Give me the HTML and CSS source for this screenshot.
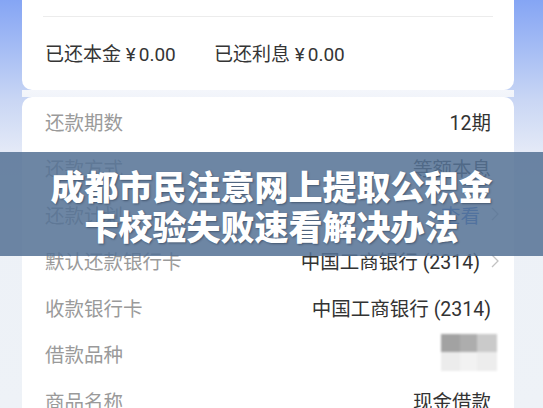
FILE: index.html
```html
<!DOCTYPE html>
<html lang="zh-CN">
<head>
<meta charset="utf-8">
<title>成都市民注意网上提取公积金卡校验失败速看解决办法</title>
<link rel="stylesheet" href="styles.css">
</head>
<body>
<div class="page">
  <div class="card card-top">
    <div class="sep"></div>
    <div class="paid">
      <span class="paid-item">已还本金 <span class="yen">¥</span>0.00</span>
      <span class="paid-item">已还利息 <span class="yen">¥</span>0.00</span>
    </div>
  </div>
  <div class="gap"></div>
  <div class="card card-list">
    <div class="row"><span class="label">还款期数</span><span class="value">12期</span></div>
    <div class="row"><span class="label">还款方式</span><span class="value">等额本息</span></div>
    <div class="row"><span class="label">还款计划</span><span class="value link">查看</span><svg class="chev" viewBox="0 0 8 14"><polyline points="1,1 7,7 1,13"/></svg></div>
    <div class="row"><span class="label">默认还款银行卡</span><span class="value">中国工商银行 (2314)</span><svg class="chev" viewBox="0 0 8 14"><polyline points="1,1 7,7 1,13"/></svg></div>
    <div class="row"><span class="label">收款银行卡</span><span class="value">中国工商银行 (2314)</span></div>
    <div class="row"><span class="label">借款品种</span>
      <div class="mosaic">
        <i class="m1"></i><i class="m2"></i><i class="m3"></i>
        <i class="m4"></i><i class="m5"></i><i class="m6"></i>
      </div>
    </div>
    <div class="row"><span class="label">商品名称</span><span class="value">现金借款</span></div>
  </div>
</div>
<div class="banner">
  <h1 class="title">成都市民注意网上提取公积金<br>卡校验失败速看解决办法</h1>
</div>
</body>
</html>
```

FILE: styles.css
```css
* { box-sizing: border-box; }

html, body {
  margin: 0;
  padding: 0;
}

body {
  width: 543px;
  height: 408px;
  overflow: hidden;
  position: relative;
  font-family: Roboto, "Noto Sans CJK SC", sans-serif;
  background: linear-gradient(to bottom, #85a5f4 0px, #a6bdf4 50px, #c9d6f4 100px, #e3e9f7 150px, #edf1f7 220px, #eef2f7 408px);
}

.page {
  padding: 0 29px 0 22px;
  display: flex;
  flex-direction: column;
}

.card {
  background: #ffffff;
}

.card-top {
  height: 90px;
  padding: 16px 21px 0 21px;
  border-radius: 0 0 10px 10px;
}

.sep {
  height: 1px;
  background: #ececec;
}

.paid {
  display: flex;
  margin-top: 26px;
  padding-left: 2px;
  font-size: 19px;
  line-height: 24px;
  color: #353535;
}

.paid-item:first-child {
  width: 169px;
}

.yen {
  margin-right: 3px;
}

.gap {
  height: 7px;
  background: linear-gradient(to bottom, #f4f6fb, #f1f4fa);
}

.card-list {
  padding: 1px 23px 0 23px;
  border-radius: 10px 10px 0 0;
}

.row {
  height: 46.5px;
  display: flex;
  align-items: center;
  font-size: 19.5px;
}

.label {
  color: #9a9a9a;
  flex: 1;
}

.value {
  color: #333333;
}

.link {
  color: #3b6fd6;
}

.chev {
  width: 8px;
  height: 14px;
  margin-left: 11px;
  margin-right: -8px;
}

.chev polyline {
  fill: none;
  stroke: #c2c2c2;
  stroke-width: 1.3;
}

.mosaic {
  display: grid;
  grid-template-columns: 19px 17px 20px;
  grid-template-rows: 18px 19px;
  margin-right: -6px;
  margin-top: -2px;
  filter: blur(0.8px);
}

.mosaic i { display: block; }
.m1 { background: #a2a2a2; }
.m2 { background: #adadad; }
.m3 { background: #cacaca; }
.m4 { background: #ececec; }
.m5 { background: #f2f2f2; }
.m6 { background: #ededed; }

.banner {
  position: absolute;
  left: 0;
  top: 152px;
  width: 543px;
  height: 104px;
  background: rgba(85, 114, 149, 0.86);
  display: flex;
  align-items: center;
  justify-content: center;
}

.title {
  margin: 4px 0 0 0;
  font-family: "Noto Sans CJK SC", sans-serif;
  font-weight: 900;
  font-size: 34px;
  line-height: 40px;
  color: #ffffff;
  text-align: center;
  text-shadow: 1px 1px 2px rgba(20, 30, 50, 0.45);
}
```
